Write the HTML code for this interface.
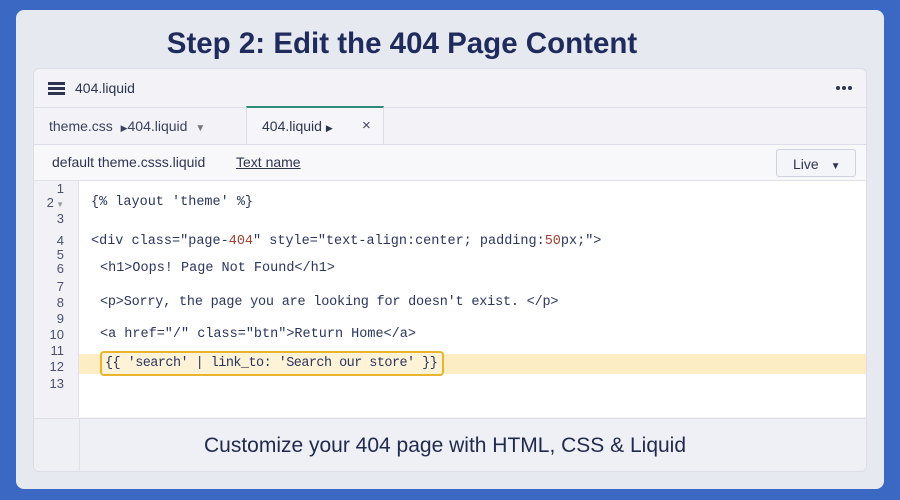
<!DOCTYPE html>
<html><head><meta charset="utf-8"><style>
*{margin:0;padding:0;box-sizing:border-box}
body{width:900px;height:500px;background:#3a68c2;font-family:"Liberation Sans","DejaVu Sans",sans-serif;position:relative;overflow:hidden}
.card{position:absolute;left:16px;top:10px;width:868px;height:479px;background:#e7e9f0;border-radius:8px}
.title{position:absolute;left:0;width:772px;top:17px;text-align:center;font-size:29.5px;font-weight:bold;color:#1f2b5c}
.panel{position:absolute;left:33px;top:68px;width:834px;height:404px;background:#f2f2f7;border:1px solid #dcdde6;border-radius:6px;overflow:hidden}
.hdr{position:absolute;left:0;top:0;width:100%;height:39px;border-bottom:1px solid #dcdde6;font-size:14px;color:#2d3450}
.tabs{position:absolute;left:0;top:39px;width:100%;height:37px;border-bottom:1px solid #dcdde6;font-size:14px;color:#3b4260}
.tb{position:absolute;left:0;top:76px;width:100%;height:36px;background:#f8f8fb;border-bottom:1px solid #e0e1e8;font-size:14px;color:#2d3450}
.code{position:absolute;left:0;top:112px;width:100%;height:236px;background:#fff}
.gut{position:absolute;left:0;top:0;width:45px;height:100%;background:#f2f2f6;border-right:1px solid #e0e1e8}
.foot{position:absolute;left:0;top:349px;width:100%;height:55px;border-top:1px solid #dcdde6;background:#eff0f5}
.ln{position:absolute;left:0;width:30px;text-align:right;font-size:13px;color:#4a5070}
.c{position:absolute;font-family:"Liberation Mono",monospace;font-size:13.5px;color:#2a3560;white-space:pre}
.n{color:#a04030}
.dot{position:absolute;top:17px;width:4px;height:4px;border-radius:2px;background:#2d3450}
</style></head><body>
<div class="card"><div class="title">Step 2: Edit the 404 Page Content</div></div>
<div class="panel">
 <div class="hdr">
  <div style="position:absolute;left:14px;top:13px;width:17px;height:2.5px;background:#2d3450;box-shadow:0 5px 0 #2d3450,0 10px 0 #2d3450"></div>
  <div style="position:absolute;left:41px;top:11px">404.liquid</div>
  <div class="dot" style="left:802px"></div><div class="dot" style="left:808px"></div><div class="dot" style="left:814px"></div>
 </div>
 <div class="tabs">
  <div style="position:absolute;left:15px;top:10px">theme.css &nbsp;<span style="font-size:9px">▶</span>404.liquid <span style="font-size:10px;color:#777;margin-left:4px">▼</span></div>
  <div style="position:absolute;left:212px;top:-2px;width:138px;height:38px;background:#f6f6fa;border-top:2px solid #2f8a78;border-left:1px solid #dcdde6;border-right:1px solid #dcdde6">
   <div style="position:absolute;left:15px;top:10px;color:#2d3450">404.liquid <span style="font-size:9px">▶</span></div>
   <div style="position:absolute;left:115px;top:9px;font-size:15px">×</div>
  </div>
 </div>
 <div class="tb">
  <div style="position:absolute;left:18px;top:9px">default theme.csss.liquid</div>
  <div style="position:absolute;left:202px;top:9px;text-decoration:underline">Text name</div>
  <div style="position:absolute;left:742px;top:4px;width:80px;height:28px;border:1px solid #cfd2de;border-radius:3px;background:#f4f5f9;padding:6px 0 0 16px">Live <span style="font-size:10px;margin-left:8px">▼</span></div>
 </div>
 <div class="code">
  <div class="gut"></div>
  <div style="position:absolute;left:45px;top:173px;width:789px;height:20px;background:#fdedc4"></div>
  <div style="position:absolute;left:66px;top:170px;width:344px;height:25px;border:2px solid #e9b52e;border-radius:4px;background:#fef3d6"></div>
  <div class="ln" style="top:0">1</div>
  <div class="ln" style="top:14px">2<span style="font-size:8px;color:#999"> ▼</span></div>
  <div class="ln" style="top:30px">3</div>
  <div class="ln" style="top:52px">4</div>
  <div class="ln" style="top:66px">5</div>
  <div class="ln" style="top:80px">6</div>
  <div class="ln" style="top:98px">7</div>
  <div class="ln" style="top:114px">8</div>
  <div class="ln" style="top:130px">9</div>
  <div class="ln" style="top:146px">10</div>
  <div class="ln" style="top:162px">11</div>
  <div class="ln" style="top:178px">12</div>
  <div class="ln" style="top:195px">13</div>
  <div class="c" style="left:57px;top:14px">{% layout 'theme' %}</div>
  <div class="c" style="left:57px;top:53px">&lt;div class="page-<span class="n">404</span>" style="text-align:center; padding:<span class="n">50</span>px;"&gt;</div>
  <div class="c" style="left:66px;top:80px">&lt;h1&gt;Oops! Page Not Found&lt;/h1&gt;</div>
  <div class="c" style="left:66px;top:114px;letter-spacing:-0.2px">&lt;p&gt;Sorry, the page you are looking for doesn't exist. &lt;/p&gt;</div>
  <div class="c" style="left:66px;top:146px">&lt;a href="/" class="btn"&gt;Return Home&lt;/a&gt;</div>
  <div class="c" style="left:71px;top:175px;letter-spacing:-0.55px">{{ 'search' | link_to: 'Search our store' }}</div>
 </div>
 <div class="foot">
  <div style="position:absolute;left:45px;top:0;width:1px;height:100%;background:#e0e1e8"></div>
  <div style="position:absolute;left:0;right:10px;top:15px;text-align:center;font-size:21px;color:#1f2a4c">Customize your 404 page with HTML, CSS &amp; Liquid</div>
 </div>
</div>
</body></html>
